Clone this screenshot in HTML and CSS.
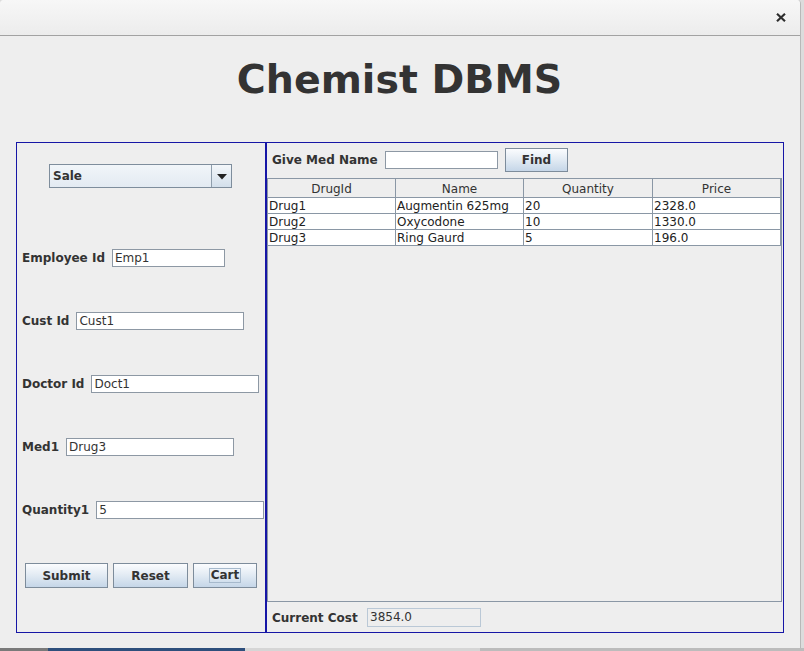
FILE: index.html
```html
<!DOCTYPE html>
<html>
<head>
<meta charset="utf-8">
<title>Chemist DBMS</title>
<link rel="stylesheet" href="styles.css">
</head>
<body>
<div class="window">
  <div class="titlebar">
    <span class="close"><svg width="10" height="9" viewBox="0 0 10 9"><path d="M1 0.8 L9 8.2 M9 0.8 L1 8.2" stroke="#2e2e2e" stroke-width="2.2" fill="none"/></svg></span>
  </div>
  <div class="content">
    <h1 class="title">Chemist DBMS</h1>
    <div class="panels">
      <div class="panel left">
        <div class="combo">
          <span class="combo-text">Sale</span>
          <span class="combo-arrow"><svg width="10" height="6" viewBox="0 0 10 6"><path d="M0 0 H10 L5 5.5 Z" fill="#222"/></svg></span>
        </div>
        <div class="row r1"><span class="label">Employee Id</span><span class="field w113">Emp1</span></div>
        <div class="row"><span class="label">Cust Id</span><span class="field w168">Cust1</span></div>
        <div class="row"><span class="label">Doctor Id</span><span class="field w168">Doct1</span></div>
        <div class="row"><span class="label">Med1</span><span class="field w168">Drug3</span></div>
        <div class="row"><span class="label">Quantity1</span><span class="field w168">5</span></div>
        <div class="buttons">
          <span class="btn b-submit">Submit</span>
          <span class="btn b-reset">Reset</span>
          <span class="btn b-cart"><span class="focus">Cart</span></span>
        </div>
      </div>
      <div class="panel right">
        <div class="search">
          <span class="label search-label">Give Med Name</span>
          <span class="field w113"></span>
          <span class="btn b-find">Find</span>
        </div>
        <div class="scroll">
          <div class="trow thead">
            <div class="cell c1">DrugId</div>
            <div class="cell c2">Name</div>
            <div class="cell c3">Quantity</div>
            <div class="cell c4">Price</div>
          </div>
          <div class="trow">
            <div class="cell c1">Drug1</div>
            <div class="cell c2">Augmentin 625mg</div>
            <div class="cell c3">20</div>
            <div class="cell c4">2328.0</div>
          </div>
          <div class="trow">
            <div class="cell c1">Drug2</div>
            <div class="cell c2">Oxycodone</div>
            <div class="cell c3">10</div>
            <div class="cell c4">1330.0</div>
          </div>
          <div class="trow">
            <div class="cell c1">Drug3</div>
            <div class="cell c2">Ring Gaurd</div>
            <div class="cell c3">5</div>
            <div class="cell c4">196.0</div>
          </div>
        </div>
        <div class="cost">
          <span class="label cost-label">Current Cost</span>
          <span class="field readonly">3854.0</span>
        </div>
      </div>
    </div>
  </div>
</div>
<div class="desk"></div>
</body>
</html>
```

FILE: styles.css
```css
html, body {
  margin: 0;
  padding: 0;
}
body {
  width: 804px;
  height: 651px;
  overflow: hidden;
  background: #dcdcdc;
  font-family: "DejaVu Sans", "Liberation Sans", sans-serif;
  font-size: 12px;
  color: #333;
}
.window {
  width: 801px;
  height: 648px;
  background: #eeeeee;
  border-radius: 4px 4px 0 0;
  box-sizing: border-box;
  border-right: 1px solid #b8b8b8;
  overflow: hidden;
}
.titlebar {
  height: 35px;
  border-bottom: 1px solid #a2a2a2;
  background: linear-gradient(#f7f7f7, #ececec);
  display: flex;
  justify-content: flex-end;
  align-items: flex-start;
  padding-right: 14px;
}
.close {
  display: block;
  margin-top: 13px;
  height: 9px;
}
.close svg { display: block; }
.content {
  padding: 20px 0 0 16px;
}
.title {
  margin: 0 0 40px -16px;
  height: 46px;
  line-height: 46px;
  font-size: 39.5px;
  font-weight: bold;
  text-align: center;
  color: #333;
  width: 799px;
}
.panels {
  display: flex;
  height: 491px;
}
.panel {
  box-sizing: border-box;
  height: 491px;
  border: 1px solid #1616a6;
  display: flex;
  flex-direction: column;
  align-items: flex-start;
}
.panel.left {
  width: 250px;
  padding-top: 21px;
}
.panel.right {
  width: 518px;
  padding-top: 5px;
}
.combo {
  margin-left: 32px;
  width: 183px;
  height: 24px;
  box-sizing: border-box;
  border: 1px solid #7e8d9c;
  background: linear-gradient(#f1f5f9, #e3eaf2);
  display: flex;
}
.combo-text {
  flex: 1;
  font-weight: bold;
  line-height: 22px;
  padding-left: 3px;
}
.combo-arrow {
  width: 19px;
  border-left: 1px solid #8f9eac;
  background: linear-gradient(#f4f7fa, #d3dfeb);
  display: flex;
  align-items: center;
  justify-content: center;
}
.combo-arrow svg { display: block; margin-top: 1px; }
.row {
  display: flex;
  align-items: center;
  height: 18px;
  margin-top: 45px;
  padding-left: 5px;
  gap: 7px;
}
.row.r1 { margin-top: 61px; }
.label {
  font-weight: bold;
  white-space: nowrap;
}
.field {
  box-sizing: border-box;
  height: 18px;
  border: 1px solid #8d98a4;
  background: #fff;
  line-height: 16px;
  padding-left: 2px;
  white-space: nowrap;
  display: block;
}
.w113 { width: 113px; }
.w168 { width: 168px; }
.buttons {
  margin-top: 44px;
  margin-left: 8px;
  display: flex;
  gap: 5px;
}
.btn {
  box-sizing: border-box;
  height: 25px;
  border: 1px solid #7d8c9b;
  background: linear-gradient(#fbfcfe, #e4ecf4 45%, #c5d6e8);
  font-weight: bold;
  display: flex;
  align-items: center;
  justify-content: center;
  color: #333;
}
.b-submit { width: 83px; }
.b-reset { width: 75px; }
.b-cart { width: 64px; }
.focus {
  border: 1px solid #a6b9cc;
  padding: 0 1px;
  line-height: 13px;
}
.search {
  display: flex;
  align-items: center;
  height: 24px;
}
.search-label {
  width: 118px;
  box-sizing: border-box;
  padding-left: 5px;
}
.b-find {
  width: 63px;
  height: 24px;
  margin-left: 7px;
}
.scroll {
  margin-top: 6px;
  width: 515px;
  height: 424px;
  box-sizing: border-box;
  border: 1px solid #8a97a5;
  background: #eeeeee;
}
.trow {
  display: flex;
  height: 16px;
  background: #fff;
}
.trow.thead {
  height: 19px;
  background: #eeeeee;
}
.cell {
  box-sizing: border-box;
  border-right: 1px solid #8a97a5;
  border-bottom: 1px solid #8a97a5;
  line-height: 15px;
  padding-top: 1px;
  padding-left: 1px;
  white-space: nowrap;
  overflow: hidden;
  color: #222;
}
.thead .cell {
  line-height: 18px;
  padding-top: 1px;
  text-align: center;
  padding-left: 0;
  color: #333;
}
.c1 { width: 128px; }
.c2 { width: 128px; }
.c3 { width: 129px; }
.c4 { width: 128px; }
.cost {
  margin-top: 6px;
  display: flex;
  align-items: center;
  height: 19px;
}
.cost-label {
  width: 100px;
  box-sizing: border-box;
  padding-left: 5px;
}
.field.readonly {
  width: 114px;
  height: 19px;
  line-height: 17px;
  background: #eeeeee;
  border-color: #bac8d6;
}
.desk {
  height: 3px;
  background: linear-gradient(to right, #7a7a7a 0 48px, #2e4f7c 48px 245px, #d6d6d6 245px 480px, #bcbcbc 480px);
}
```
